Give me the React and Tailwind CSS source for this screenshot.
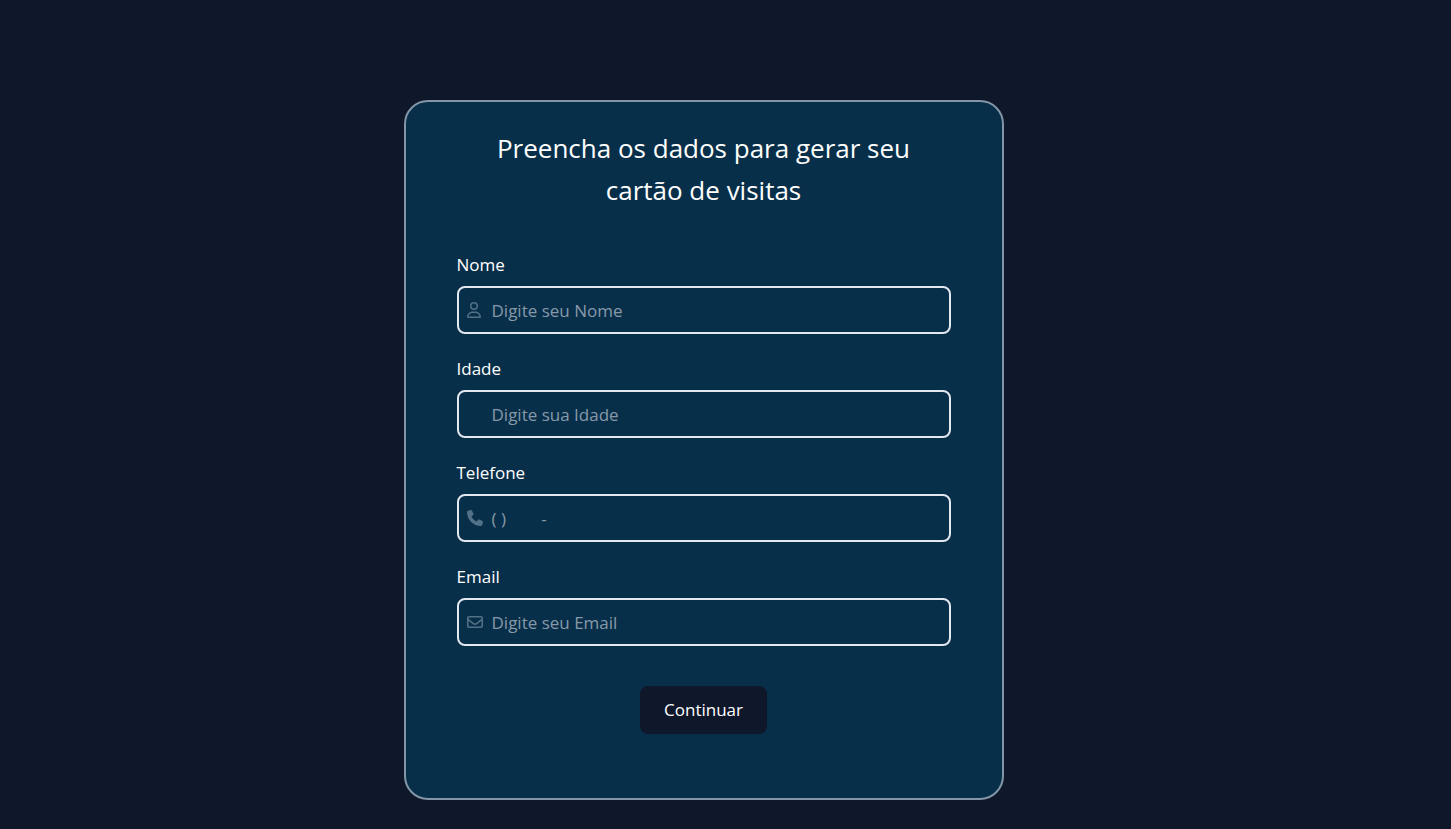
import { FaPhone, FaRegEnvelope, FaRegUser } from "react-icons/fa6";

const fields = [
  { id: "nome", label: "Nome", type: "text", placeholder: "Digite seu Nome", Icon: FaRegUser, iconClass: "w-[14px]" },
  { id: "idade", label: "Idade", type: "text", placeholder: "Digite sua Idade" },
  { id: "telefone", label: "Telefone", type: "tel", placeholder: "( )        -", Icon: FaPhone, iconClass: "w-4" },
  { id: "email", label: "Email", type: "email", placeholder: "Digite seu Email", Icon: FaRegEnvelope, iconClass: "w-4" },
];

function Field({ id, label, type, placeholder, Icon, iconClass }) {
  return (
    <div className="flex flex-col gap-2">
      <label htmlFor={id} className="self-start leading-[27px]">
        {label}
      </label>
      <div className="flex h-12 items-center rounded-lg border-2 border-slate-200 pl-2">
        <span className="flex w-[25px] shrink-0 text-[#527086]">
          {Icon && <Icon aria-hidden="true" className={`h-4 ${iconClass}`} />}
        </span>
        <input
          id={id}
          name={id}
          type={type}
          placeholder={placeholder}
          className="h-full min-w-0 flex-1 bg-transparent text-white outline-none placeholder:text-[#8799a9]"
        />
      </div>
    </div>
  );
}

export default function App() {
  return (
    <main className="flex min-h-screen justify-center bg-slate-900 pt-[100px] pr-11 pb-7 font-['Open_Sans',sans-serif] text-[17px] text-white">
      <form className="flex w-full max-w-[600px] flex-col self-start rounded-3xl border-2 border-[#8296a5] bg-[#082f49] px-[51px] pt-[25px] pb-16">
        <h1 className="mx-auto max-w-[440px] text-center text-[26px] leading-[42px]">
          Preencha os dados para gerar seu cartão de visitas
        </h1>
        <div className="mt-10 flex flex-col gap-[21px]">
          {fields.map((field) => (
            <Field key={field.id} {...field} />
          ))}
        </div>
        <button type="submit" className="mt-10 h-12 self-center rounded-lg bg-slate-900 px-6">
          Continuar
        </button>
      </form>
    </main>
  );
}
